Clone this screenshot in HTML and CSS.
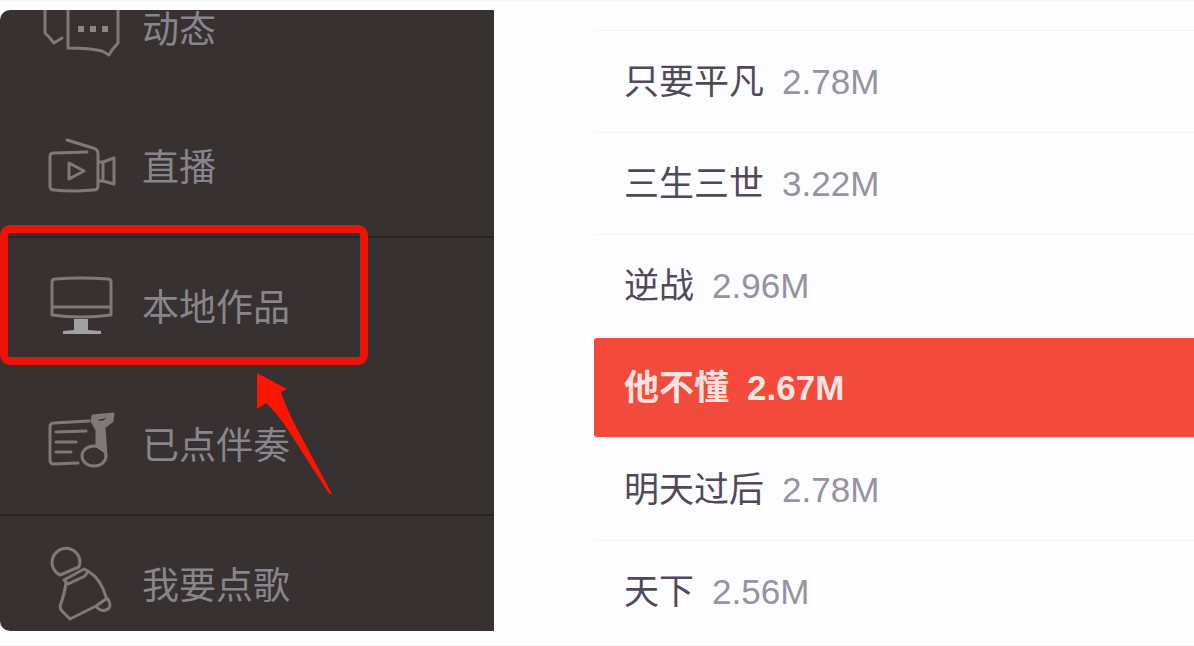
FILE: index.html
```html
<!DOCTYPE html>
<html lang="zh-CN">
<head>
  <meta charset="UTF-8">
  <title>本地作品</title>
  <link rel="stylesheet" href="styles.css">
</head>
<body>
  <div class="app">
    <nav class="sidebar">
      <ul class="menu">
        <li>
          <a class="menu-item" href="#">
            <svg class="icon" viewBox="0 0 80 79">
              <path d="M3 8V43L7 47L12 53L20 48M26 8V58Q48 58 60 61L67 65L70 60L76 53V8"/>
              <path class="solid" d="M36 36h6v6h-6zM48 36h6v6h-6zM60 36h6v6h-6z"/>
            </svg>
            <span>动态</span>
          </a>
        </li>
        <li>
          <a class="menu-item section-end" href="#">
            <svg class="icon" viewBox="0 0 80 79">
              <path d="M25 12L51 20Q56 21 56 26V58Q56 62 51 62Q30 64 12 62Q8 62 8 58V28Q8 25 12 25L45 24"/>
              <path d="M27 35V51L42 43ZM57 34H61L72 30V56L61 53H57M61 34V53"/>
            </svg>
            <span>直播</span>
          </a>
        </li>
        <li class="current">
          <a class="menu-item" href="#">
            <svg class="icon" viewBox="0 0 80 79">
              <path d="M13 11Q39 9 66 11Q69 11 69 14V47Q54 49 39 49Q24 49 10 47V14Q10 11 13 11ZM11 39H68"/>
              <path class="solid light" d="M32 51H46V62L59 63V66H21V63L32 62Z"/>
            </svg>
            <span>本地作品</span>
          </a>
          <div class="marker"></div>
          <svg class="arrow" viewBox="0 0 80 124">
            <path d="M1 1Q16 9 31 17L25 20Q28 30 38 51L76 122Q73 123 70 117L34 61Q22 42 10 31L1 37Z"/>
          </svg>
        </li>
        <li>
          <a class="menu-item section-end" href="#">
            <svg class="icon" viewBox="0 0 80 79">
              <path d="M47 15L12 17Q8 17 8 21V54Q8 58 12 58L36 57M14 26L44 25M14 36H34M14 46H29"/>
              <ellipse cx="52" cy="50" rx="12" ry="10"/>
              <path class="stem" d="M64 50L62 21L70 15L71 8L51 10L50 15L55 24L55 40L62 45"/>
              <path class="hole" d="M55 14L65 12L60 15Z"/>
            </svg>
            <span>已点伴奏</span>
          </a>
        </li>
        <li>
          <a class="menu-item" href="#">
            <svg class="icon" viewBox="0 0 80 79">
              <path d="M18 29A14 14 0 1 1 38 17L37 21ZM22 34L42 23L46 25L43 30L26 38ZM24 36Q23 47 18 60L19 64L28 73L54 60M46 25Q59 33 64 51L67 55Q70 62 64 64Q58 66 54 60L64 53"/>
            </svg>
            <span>我要点歌</span>
          </a>
        </li>
      </ul>
    </nav>

    <main class="content">
      <ul class="songs">
        <li class="song"><span>只要平凡</span><span class="size">2.78M</span></li>
        <li class="song"><span>三生三世</span><span class="size">3.22M</span></li>
        <li class="song"><span>逆战</span><span class="size">2.96M</span></li>
        <li class="song selected"><span>他不懂</span><span class="size">2.67M</span></li>
        <li class="song"><span>明天过后</span><span class="size">2.78M</span></li>
        <li class="song"><span>天下</span><span class="size">2.56M</span></li>
      </ul>
    </main>
  </div>
</body>
</html>
```

FILE: styles.css
```css
* {
  box-sizing: border-box;
}
body {
  margin: 0;
  background: #fdfdff;
  font-family: "Liberation Sans", "Noto Sans CJK SC", sans-serif;
}
ul {
  list-style: none;
  margin: 0;
  padding: 0;
}
.app {
  display: flex;
  gap: 100px;
  height: 100vh;
  border-top: 1px solid #f6f6f8;
  border-bottom: 1px solid #f3f4f6;
  overflow: hidden;
}

/* left menu, scrolled a little way down */
.sidebar {
  flex: 0 0 494px;
  margin: 9px 0 14px;
  background: #383131;
  border-radius: 10px 0 0 10px;
  overflow: hidden;
}
.menu {
  margin-top: -50px;
}
.menu-item {
  display: flex;
  align-items: center;
  gap: 20px;
  height: 139px;
  padding-left: 42px;
  color: #89858c;
  font-size: 37px;
  line-height: 44px;
  text-decoration: none;
}
.menu-item span {
  padding-top: 3px;
}
.section-end {
  border-bottom: 2px solid #2a2425;
}
.icon {
  width: 80px;
  height: 79px;
  fill: none;
  stroke: #7f7979;
  stroke-width: 3;
  stroke-linejoin: round;
  stroke-linecap: round;
}
.icon .solid {
  fill: #8b8586;
  stroke: none;
}
.icon .light {
  fill: #a2a1a4;
}
.icon .stem {
  fill: #7f7979;
}
.icon .hole {
  fill: #383131;
  stroke: none;
}
.current {
  position: relative;
}
.marker {
  position: absolute;
  top: -13px;
  left: 0;
  width: 368px;
  height: 140px;
  border: 8px solid #ea1508;
  border-radius: 10px;
}
.arrow {
  position: absolute;
  top: 134px;
  left: 256px;
  width: 80px;
  height: 124px;
  fill: #fb1502;
}

.content {
  flex: 1;
  padding-top: 29px;
}
.songs {
  border-top: 1px solid #f3f3f7;
}
.song {
  display: flex;
  align-items: center;
  gap: 18px;
  height: 102px;
  padding-left: 30px;
  border-bottom: 1px solid #f3f3f7;
  color: #51485a;
  font-size: 35px;
  line-height: 46px;
}
.song:last-child {
  border-bottom: none;
}
.size {
  color: #9692a0;
}
.selected {
  height: 99px;
  margin: 1px 0 2px;
  border: none;
  border-radius: 3px 0 0 3px;
  background: #f24a3c;
  color: #ffe3df;
  font-weight: bold;
}
.selected .size {
  color: #ffe3df;
}
```
